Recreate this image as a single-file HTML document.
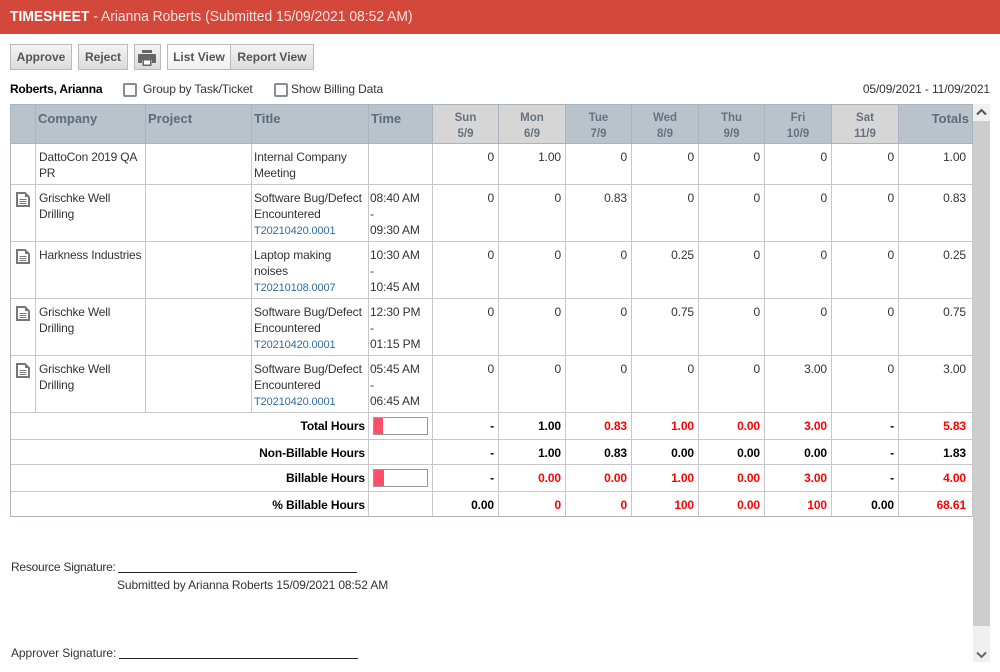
<!DOCTYPE html>
<html><head><meta charset="utf-8"><title>Timesheet</title>
<style>
html,body{margin:0;padding:0;width:1000px;height:672px;overflow:hidden;background:#fff;font-family:"Liberation Sans",sans-serif;font-size:12px;color:#333}
.a{position:absolute;white-space:nowrap}
.ls{letter-spacing:-.12px}
#hd{left:0;top:0;width:1000px;height:34px;background:#d4483c}
#hdt{left:10px;top:0;line-height:34px;font-size:15px;color:#fbe3e0;transform-origin:0 50%;transform:scaleX(.925)}
#hdt b{color:#fff}
.btn{position:absolute;top:44px;height:24px;border:1px solid #bbb;background:linear-gradient(#f4f4f4,#dcdcdc);color:#555;font-weight:bold;font-size:12px;line-height:25px;text-align:center}
.cb{position:absolute;top:83px;width:10px;height:10px;border:2px solid #8b8b98;border-radius:2px;background:#fff}
table{position:absolute;left:10px;top:104px;border-collapse:separate;border-spacing:0;table-layout:fixed;width:963px;border-left:1px solid #a9b4bf;border-top:1px solid #a9b4bf;font-size:12px;letter-spacing:-.12px}
td,th{border-right:1px solid #c8c8c8;border-bottom:1px solid #c8c8c8;padding:0;vertical-align:top;overflow:hidden;box-sizing:border-box}
td{padding:5px 2px 0 2px;line-height:16px}
td.c{padding-left:3px;padding-right:0;letter-spacing:-.2px}
th{background:#b9c3cb;color:#5d6b7a;border-right-color:#a9b4bf;border-bottom-color:#a9b4bf;font-size:13px;text-align:left;padding:5px 2px 0 2px;line-height:18px;letter-spacing:0}
th.d{font-size:11.5px;text-align:center;padding-top:5px;line-height:16px;color:#66727f}
th.w{background:#d6d6d6}
td.n{text-align:right;padding-right:4px}
td.t{text-align:right;padding-right:6px}
td.i{padding:7px 0 0 5px}
td.tm{padding-left:1px}
.lk{color:#2f6da0;font-size:11px}
.s td{font-weight:bold;color:#000;text-align:right;padding:5px 4px 0 0}
.s td.t{padding-right:6px}
.s .r{color:#f00}
.s td.nb{padding:0}
.s td.lb{padding-right:3px}
.last td{border-bottom-color:#a9b4bf}
.bar{display:block;width:53px;height:16px;margin:4px 0 0 4px;border:1px solid #999;background:#fff}
.bar i{display:block;height:16px;background:#ff4d6a}
#sb1{left:973px;top:104px;width:17px;height:17px;background:#f0f0f0}
#sb2{left:973px;top:121px;width:17px;height:505px;background:#cdcdcd}
#sb3{left:973px;top:626px;width:17px;height:36px;background:#f0f0f0}
</style></head>
<body>
<div class="a" id="hd"></div>
<div class="a" id="hdt"><b>TIMESHEET</b> - Arianna Roberts (Submitted 15/09/2021 08:52 AM)</div>

<div class="btn" style="left:10px;width:60px">Approve</div>
<div class="btn" style="left:78px;width:48px">Reject</div>
<div class="btn" style="left:134px;width:25px">
<svg width="25" height="24" viewBox="0 0 25 24" style="display:block"><path fill="#666" d="M7 5h10v3H7zM4 9h16a1 1 0 0 1 1 1v7a1 1 0 0 1-1 1h-3v-3H7v3H4a1 1 0 0 1-1-1v-7a1 1 0 0 1 1-1z"/><path fill="#fff" stroke="#666" stroke-width="1.500" d="M8.250 14.750h7.500v5.500h-7.500z"/></svg></div>
<div class="btn" style="left:167px;width:62px;background:linear-gradient(#fff,#f0f0f0)">List View</div>
<div class="btn" style="left:230px;width:82px">Report View</div>

<div class="a" style="left:10px;top:81px;font-weight:bold;color:#000;line-height:16px;letter-spacing:-.25px">Roberts, Arianna</div>
<div class="cb" style="left:123px"></div>
<div class="a ls" style="left:143px;top:81px;line-height:16px">Group by Task/Ticket</div>
<div class="cb" style="left:274px"></div>
<div class="a ls" style="left:291px;top:81px;line-height:16px">Show Billing Data</div>
<div class="a ls" style="right:10px;top:81px;line-height:16px">05/09/2021 - 11/09/2021</div>

<table>
<colgroup><col style="width:25px"><col style="width:110px"><col style="width:106px"><col style="width:117px"><col style="width:64px"><col style="width:66px"><col style="width:67px"><col style="width:66px"><col style="width:67px"><col style="width:66px"><col style="width:67px"><col style="width:67px"><col style="width:74px"></colgroup>
<tr style="height:39px"><th></th><th>Company</th><th>Project</th><th>Title</th><th>Time</th><th class="d w">Sun<br>5/9</th><th class="d w">Mon<br>6/9</th><th class="d">Tue<br>7/9</th><th class="d">Wed<br>8/9</th><th class="d">Thu<br>9/9</th><th class="d">Fri<br>10/9</th><th class="d w">Sat<br>11/9</th><th style="text-align:right;padding-right:3px">Totals</th></tr>

<tr style="height:41px"><td></td><td class="c">DattoCon 2019 QA PR</td><td></td><td>Internal Company Meeting</td><td class="tm"></td><td class="n">0</td><td class="n">1.00</td><td class="n">0</td><td class="n">0</td><td class="n">0</td><td class="n">0</td><td class="n">0</td><td class="t">1.00</td></tr>

<tr style="height:57px"><td class="i"><svg width="14" height="15" viewBox="0 0 14 15" style="display:block"><path fill="none" stroke="#777" stroke-width="2" d="M1 1h8l4 4v9H1z"/><path fill="#777" d="M9 1l4 4H9z"/><path stroke="#777" d="M3.500 7.500h7M3.500 9.500h7M3.500 11.500h7"/></svg></td><td class="c">Grischke Well Drilling</td><td></td><td>Software Bug/Defect Encountered<br><span class="lk">T20210420.0001</span></td><td class="tm">08:40 AM<br>-<br>09:30 AM</td><td class="n">0</td><td class="n">0</td><td class="n">0.83</td><td class="n">0</td><td class="n">0</td><td class="n">0</td><td class="n">0</td><td class="t">0.83</td></tr>

<tr style="height:57px"><td class="i"><svg width="14" height="15" viewBox="0 0 14 15" style="display:block"><path fill="none" stroke="#777" stroke-width="2" d="M1 1h8l4 4v9H1z"/><path fill="#777" d="M9 1l4 4H9z"/><path stroke="#777" d="M3.500 7.500h7M3.500 9.500h7M3.500 11.500h7"/></svg></td><td class="c">Harkness Industries</td><td></td><td>Laptop making noises<br><span class="lk">T20210108.0007</span></td><td class="tm">10:30 AM<br>-<br>10:45 AM</td><td class="n">0</td><td class="n">0</td><td class="n">0</td><td class="n">0.25</td><td class="n">0</td><td class="n">0</td><td class="n">0</td><td class="t">0.25</td></tr>

<tr style="height:57px"><td class="i"><svg width="14" height="15" viewBox="0 0 14 15" style="display:block"><path fill="none" stroke="#777" stroke-width="2" d="M1 1h8l4 4v9H1z"/><path fill="#777" d="M9 1l4 4H9z"/><path stroke="#777" d="M3.500 7.500h7M3.500 9.500h7M3.500 11.500h7"/></svg></td><td class="c">Grischke Well Drilling</td><td></td><td>Software Bug/Defect Encountered<br><span class="lk">T20210420.0001</span></td><td class="tm">12:30 PM<br>-<br>01:15 PM</td><td class="n">0</td><td class="n">0</td><td class="n">0</td><td class="n">0.75</td><td class="n">0</td><td class="n">0</td><td class="n">0</td><td class="t">0.75</td></tr>

<tr style="height:57px"><td class="i"><svg width="14" height="15" viewBox="0 0 14 15" style="display:block"><path fill="none" stroke="#777" stroke-width="2" d="M1 1h8l4 4v9H1z"/><path fill="#777" d="M9 1l4 4H9z"/><path stroke="#777" d="M3.500 7.500h7M3.500 9.500h7M3.500 11.500h7"/></svg></td><td class="c">Grischke Well Drilling</td><td></td><td>Software Bug/Defect Encountered<br><span class="lk">T20210420.0001</span></td><td class="tm">05:45 AM<br>-<br>06:45 AM</td><td class="n">0</td><td class="n">0</td><td class="n">0</td><td class="n">0</td><td class="n">0</td><td class="n">3.00</td><td class="n">0</td><td class="t">3.00</td></tr>

<tr class="s" style="height:27px"><td colspan="4" class="lb">Total Hours</td><td class="nb"><span class="bar"><i style="width:9px"></i></span></td><td>-</td><td>1.00</td><td class="r">0.83</td><td class="r">1.00</td><td class="r">0.00</td><td class="r">3.00</td><td>-</td><td class="t r">5.83</td></tr>
<tr class="s" style="height:25px"><td colspan="4" class="lb">Non-Billable Hours</td><td class="nb"></td><td>-</td><td>1.00</td><td>0.83</td><td>0.00</td><td>0.00</td><td>0.00</td><td>-</td><td class="t">1.83</td></tr>
<tr class="s" style="height:27px"><td colspan="4" class="lb">Billable Hours</td><td class="nb"><span class="bar"><i style="width:10px"></i></span></td><td>-</td><td class="r">0.00</td><td class="r">0.00</td><td class="r">1.00</td><td class="r">0.00</td><td class="r">3.00</td><td>-</td><td class="t r">4.00</td></tr>
<tr class="s last" style="height:25px"><td colspan="4" class="lb">% Billable Hours</td><td class="nb"></td><td>0.00</td><td class="r">0</td><td class="r">0</td><td class="r">100</td><td class="r">0.00</td><td class="r">100</td><td>0.00</td><td class="t r">68.61</td></tr>
</table>

<div class="a" id="sb1"><svg width="17" height="17" viewBox="0 0 17 17" style="display:block"><path fill="none" stroke="#555" stroke-width="2" d="M4 10.500l4.500-4.500 4.500 4.500"/></svg></div>
<div class="a" id="sb2"></div>
<div class="a" id="sb3"><svg width="17" height="36" viewBox="0 0 17 36" style="display:block"><path fill="none" stroke="#666" stroke-width="2" d="M4 26.500l4.500 4.500 4.500-4.500"/></svg></div>

<div class="a" style="left:11px;top:559px;line-height:16px;letter-spacing:-.25px">Resource Signature:</div>
<div class="a" style="left:118px;top:572px;width:239px;height:1px;background:#222"></div>
<div class="a ls" style="left:117px;top:577px;line-height:16px">Submitted by Arianna Roberts 15/09/2021 08:52 AM</div>
<div class="a" style="left:11px;top:645px;line-height:16px;letter-spacing:-.08px">Approver Signature:</div>
<div class="a" style="left:119px;top:658px;width:239px;height:1px;background:#222"></div>
</body></html>
